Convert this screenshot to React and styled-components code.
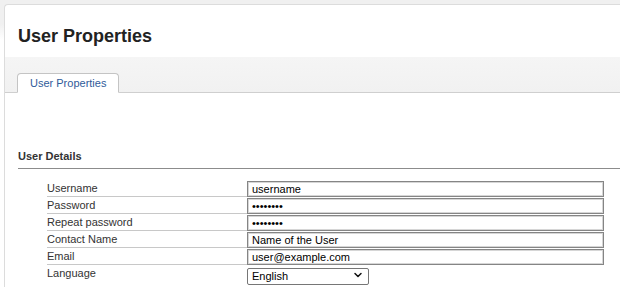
import React from 'react';
import styled, { createGlobalStyle } from 'styled-components';
import { ChevronDown } from 'lucide-react';

const GlobalStyle = createGlobalStyle`
  html, body {
    margin: 0;
    padding: 0;
  }
  body {
    font-family: "Liberation Sans", Arial, sans-serif;
    background: linear-gradient(#f0f0f0 0, #f0f0f0 24px, #ffffff 40px);
    height: 288px;
    overflow: hidden;
  }
`;

const Page = styled.div`
  padding: 4px 0 0 4px;
`;

const Panel = styled.section`
  background: #fff;
  border: 1px solid #dcdcdc;
  border-right: none;
  border-bottom: none;
  border-top-left-radius: 4px;
  height: 283px;
  box-sizing: border-box;
`;

const PanelHeader = styled.header`
  height: 52px;
  box-sizing: border-box;
  padding: 20px 0 0 13px;

  h1 {
    margin: 0;
    font-size: 18px;
    line-height: 22px;
    font-weight: bold;
    color: #222;
  }
`;

const TabBar = styled.nav`
  height: 36px;
  box-sizing: border-box;
  padding: 16px 0 0 12px;
  background: linear-gradient(#f5f5f5, #f1f1f1);
  border-bottom: 1px solid #cfcfcf;
  display: flex;
  align-items: flex-end;
`;

const Tab = styled.button`
  height: 20px;
  margin-bottom: -1px;
  padding: 0 12px;
  box-sizing: border-box;
  border: 1px solid #c4c4c4;
  border-bottom-color: #fff;
  border-radius: 4px 4px 0 0;
  background: #fff;
  font-family: inherit;
  font-size: 11px;
  line-height: 18px;
  color: ${(p) => (p.$active ? '#2f5b9a' : '#444')};
  cursor: pointer;
`;

const Content = styled.div`
  padding: 57px 0 0 13px;
`;

const SectionTitle = styled.h2`
  margin: 0;
  font-size: 11px;
  line-height: 13px;
  font-weight: bold;
  color: #333;
  padding-bottom: 5px;
  border-bottom: 1px solid #8c8c8c;
`;

const FormGrid = styled.div`
  display: grid;
  grid-template-columns: 200px 357px;
  grid-auto-rows: 17px;
  margin: 11px 0 0 29px;
`;

const Label = styled.label`
  font-size: 11px;
  line-height: 16px;
  color: #333;
  border-bottom: 1px solid ${(p) => (p.$last ? 'transparent' : '#c8c8c8')};
`;

const Field = styled.div`
  padding-top: 1px;
  position: relative;
`;

const TextInput = styled.input`
  display: block;
  width: 100%;
  height: 16px;
  box-sizing: border-box;
  margin: 0;
  padding: 0 4px;
  border: 1px solid #858585;
  box-shadow: inset 0 0 0 1px #d6d6d6;
  font-family: "Liberation Sans", Arial, sans-serif;
  font-size: 11px;
  color: #000;
  background: #fff;
  outline: none;
`;

const SelectWrap = styled.div`
  position: relative;
  width: 122px;
  height: 17px;

  svg {
    position: absolute;
    right: 5px;
    top: 3px;
    pointer-events: none;
  }
`;

const Select = styled.select`
  appearance: none;
  width: 100%;
  height: 17px;
  box-sizing: border-box;
  margin: 0;
  padding: 0 0 0 4px;
  border: 1px solid #767676;
  border-radius: 2px;
  background: #fff;
  font-family: "Liberation Sans", Arial, sans-serif;
  font-size: 11px;
  color: #000;
  outline: none;
`;

const fields = [
  { label: 'Username', type: 'text', value: 'username' },
  { label: 'Password', type: 'password', value: '12345678' },
  { label: 'Repeat password', type: 'password', value: '12345678' },
  { label: 'Contact Name', type: 'text', value: 'Name of the User' },
  { label: 'Email', type: 'text', value: 'user@example.com' },
];

export default function App() {
  return (
    <>
      <GlobalStyle />
      <Page>
        <Panel>
          <PanelHeader>
            <h1>User Properties</h1>
          </PanelHeader>
          <TabBar>
            <Tab $active>User Properties</Tab>
          </TabBar>
          <Content>
            <SectionTitle>User Details</SectionTitle>
            <FormGrid>
              {fields.map((f) => (
                <React.Fragment key={f.label}>
                  <Label>{f.label}</Label>
                  <Field>
                    <TextInput type={f.type} defaultValue={f.value} />
                  </Field>
                </React.Fragment>
              ))}
              <Label $last>Language</Label>
              <Field>
                <SelectWrap>
                  <Select defaultValue="en">
                    <option value="en">English</option>
                  </Select>
                  <ChevronDown size={12} strokeWidth={3} color="#111" />
                </SelectWrap>
              </Field>
            </FormGrid>
          </Content>
        </Panel>
      </Page>
    </>
  );
}
